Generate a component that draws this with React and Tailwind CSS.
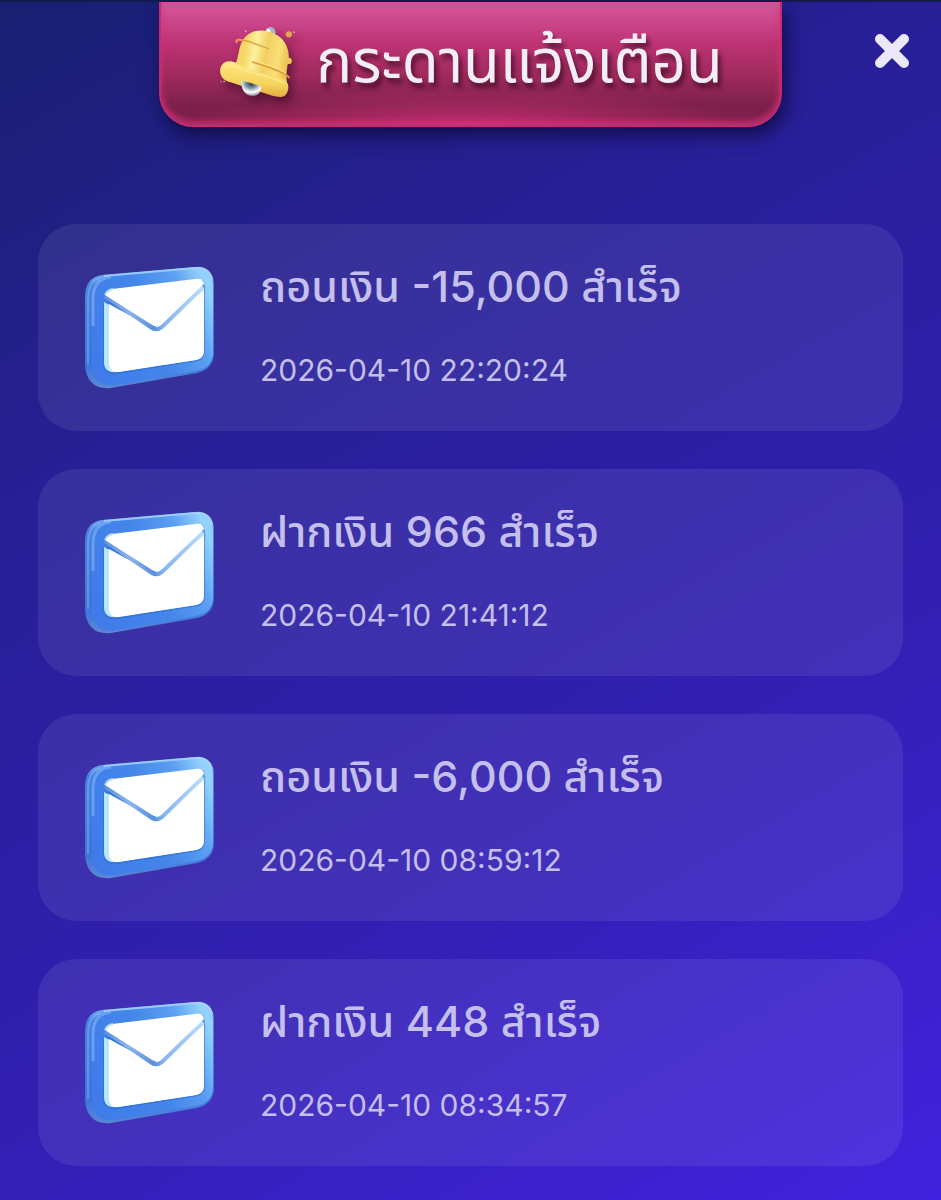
const NOTIFICATIONS = [
  { id: 1, title: 'ถอนเงิน -15,000 สำเร็จ', time: '2026-04-10 22:20:24' },
  { id: 2, title: 'ฝากเงิน 966 สำเร็จ', time: '2026-04-10 21:41:12' },
  { id: 3, title: 'ถอนเงิน -6,000 สำเร็จ', time: '2026-04-10 08:59:12' },
  { id: 4, title: 'ฝากเงิน 448 สำเร็จ', time: '2026-04-10 08:34:57' },
];

// Gradients shared by the bell and every mail icon
function GradientDefs() {
  return (
    <svg className="absolute h-0 w-0" aria-hidden="true">
      <defs>
        <linearGradient id="mailSide" x1="0" y1="0" x2="0" y2="1">
          <stop offset="0" stopColor="#8ac4f8" />
          <stop offset="0.15" stopColor="#4a82e0" />
          <stop offset="0.8" stopColor="#3c74dc" />
          <stop offset="1" stopColor="#5a88d4" />
        </linearGradient>
        <linearGradient id="mailFace" x1="0" y1="0.7" x2="1" y2="0.3">
          <stop offset="0" stopColor="#3f7cea" />
          <stop offset="0.5" stopColor="#4586ea" />
          <stop offset="0.8" stopColor="#5ba0f2" />
          <stop offset="1" stopColor="#93d0fb" />
        </linearGradient>
        <linearGradient id="mailFold" x1="0" y1="0" x2="1" y2="0">
          <stop offset="0" stopColor="#5f92dc" />
          <stop offset="0.25" stopColor="#8ab4ec" />
          <stop offset="0.5" stopColor="#5a8fde" />
          <stop offset="0.6" stopColor="#86b4f0" />
          <stop offset="1" stopColor="#b9ddfa" />
        </linearGradient>
        <linearGradient id="bellBody" x1="0" y1="0.1" x2="1" y2="0.3">
          <stop offset="0" stopColor="#f4cf60" />
          <stop offset="0.25" stopColor="#f5d868" />
          <stop offset="0.42" stopColor="#fdf0a0" />
          <stop offset="0.62" stopColor="#f2d062" />
          <stop offset="0.85" stopColor="#f9df78" />
          <stop offset="1" stopColor="#eec555" />
        </linearGradient>
        <linearGradient id="bellRim" x1="0.3" y1="0" x2="0.2" y2="1">
          <stop offset="0" stopColor="#ffe985" />
          <stop offset="0.6" stopColor="#f5d25c" />
          <stop offset="1" stopColor="#dda43a" />
        </linearGradient>
        <radialGradient id="bellClapper" cx="0.5" cy="0.2" r="0.8">
          <stop offset="0" stopColor="#263747" />
          <stop offset="0.35" stopColor="#7893a3" />
          <stop offset="0.7" stopColor="#ffffff" />
          <stop offset="1" stopColor="#8b8797" />
        </radialGradient>
      </defs>
    </svg>
  );
}

function BellIcon() {
  return (
    <svg
      viewBox="-2 0 76 72"
      className="h-[74px] w-[78px] shrink-0 drop-shadow-[4px_6px_5px_rgba(50,5,30,0.55)]"
      aria-hidden="true"
    >
      <circle cx="49" cy="5" r="5" fill="#aeb6c8" />
      <circle cx="47" cy="4" r="2" fill="#ffffff" />
      <path
        d="M13 39 C18 34 17 22 22 13 C28 3 41 1 52 6 C62 10 67 19 67 29 C66 39 63 45 66 58 C48 62 17 52 13 39Z"
        fill="url(#bellBody)"
      />
      <path
        d="M0 42 C1 34 8 31 16 35 C26 42 40 45 56 48 C65 51 68 56 66 62 C64 69 59 69 51 67 L11 54 C3 52 0 48 0 42Z"
        fill="url(#bellRim)"
      />
      <path
        d="M5 38 C14 34 22 43 33 45 C43 47 52 49 61 54"
        fill="none"
        stroke="#fff1a0"
        strokeWidth="2"
        opacity="0.5"
      />
      <path d="M21 52 Q30 54 40 58 C41 64 36 68 30 67 C24 66 20 60 21 52Z" fill="url(#bellClapper)" />
      <path
        d="M16 15 C15 11 21 12 28 14 L47 21"
        fill="none"
        stroke="#dca548"
        strokeWidth="1.5"
        strokeLinecap="round"
      />
      <path d="M16 14 C16 12 19 12 22 13" fill="none" stroke="#e8906c" strokeWidth="2" strokeLinecap="round" />
      <path d="M32 34 C44 38 62 43 67 49" fill="none" stroke="#d9a03c" strokeWidth="2" strokeLinecap="round" />
      <path d="M32 33 C44 36 58 40 64 45" fill="none" stroke="#ffe68c" strokeWidth="1" />
      <circle cx="67" cy="33" r="3" fill="#eec454" />
      <circle cx="67" cy="7" r="3" fill="#e3a650" />
      <circle cx="72" cy="5" r="1" fill="#eaa38e" />
      <circle cx="25" cy="4" r="1" fill="#f099a6" />
      <circle cx="1" cy="53" r="1" fill="#b76c7d" />
      <circle cx="4" cy="53" r="1" fill="#df8c86" />
    </svg>
  );
}

function MailIcon() {
  return (
    <svg viewBox="0 0 132 124" className="h-[124px] w-[132px] shrink-0" aria-hidden="true">
      <path
        d="M18 9 L111 1 C123 0 130 7 130 19 V87 C130 98 124 104 113 107 L27 122 C11 124 2 115 1 99 V32 C1 18 6 11 18 9Z"
        fill="url(#mailSide)"
      />
      <path
        d="M27 10 L112 2 C123 1 129 8 129 19 V86 C129 97 123 103 112 105 L32 119 C17 121 9 114 8 101 V32 C8 18 14 11 27 10Z"
        fill="url(#mailFace)"
      />
      <path d="M4 98 V34 C4 22 8 14 16 12" fill="none" stroke="#a9d6fc" strokeWidth="2" opacity="0.3" />
      <path d="M9 60 V33 C9 20 14 12 27 11" fill="none" stroke="#9fd0fc" strokeWidth="3" opacity="0.4" />
      <path d="M20 10 L112 2 C121 1 127 6 128 14" fill="none" stroke="#a9d8ff" strokeWidth="2" opacity="0.7" />
      <path
        d="M19 37 L119 14 Q122 20 121 28 V85 Q121 92 115 95 L33 108 C24 109 19 105 19 97Z"
        fill="#2867cb"
        opacity="0.5"
      />
      <path
        d="M20 36 L70 62 L120 22 V84 C120 90 117 93 112 94 L32 106 C24 107 20 103 20 96Z"
        fill="#b8e6ff"
      />
      <path
        d="M25 38 L72 64 L120 24 V84 C120 90 117 93 112 94 L35 106 C28 107 25 103 25 96Z"
        fill="#ffffff"
      />
      <path
        d="M21 30 L68 62 Q73 65 78 61 L119 21"
        fill="none"
        stroke="url(#mailFold)"
        strokeWidth="4"
        strokeLinejoin="round"
      />
      <path
        d="M21 29 Q22 25 28 23 L111 13 C117 12 119 14 120 18 L77 59 Q73 62 68 59Z"
        fill="#ffffff"
      />
      <path d="M21 29 Q23 24 29 23" fill="none" stroke="#b5e0fb" strokeWidth="2" />
    </svg>
  );
}

function CloseButton() {
  return (
    <button
      type="button"
      aria-label="ปิด"
      className="absolute top-[27px] right-[27px] cursor-pointer p-1 text-[#ebe8fa]"
    >
      <svg viewBox="0 0 36 36" className="size-9" aria-hidden="true">
        <path d="M6 6 L30 30 M30 6 L6 30" stroke="currentColor" strokeWidth="10" strokeLinecap="round" />
      </svg>
    </button>
  );
}

function NotificationCard({ title, time }) {
  return (
    <li className="flex h-[207px] items-center gap-11 rounded-[38px] bg-white/8 px-[46px]">
      <MailIcon />
      <div className="flex min-w-0 flex-col gap-[34px] pb-[10px] text-[#c4bfec]">
        <h2 className="text-[43px] leading-[60px] font-medium whitespace-nowrap">{title}</h2>
        <time className="text-[30px] leading-10 whitespace-nowrap">{time}</time>
      </div>
    </li>
  );
}

export default function App() {
  return (
    <main className="relative min-h-screen border-t-2 border-[#111c4d] bg-[linear-gradient(150deg,#191f71_0%,#271f96_30%,#321fb2_65%,#4222df_100%)] pb-8 font-['Inter','Noto_Sans_Thai','Noto_Sans',sans-serif]">
      <GradientDefs />
      <header className="flex justify-center">
        <div className="flex h-[125px] w-[66.3%] items-center justify-center gap-5 rounded-b-[34px] border-x-2 border-b-2 border-[#c52c6e] bg-[radial-gradient(ellipse_46%_30%_at_50%_100%,rgba(214,50,122,0.75),transparent),linear-gradient(180deg,#d8589f_0%,#bd3374_34%,#a22b5f_58%,#7c204b_85%,#7c204b_100%)] shadow-[4px_8px_18px_rgba(12,8,50,0.75),inset_0_-4px_6px_rgba(222,55,130,0.6),inset_0_0_8px_rgba(210,40,110,0.4)]">
          <BellIcon />
          <h1 className="pb-2 text-[60px] leading-[76px] whitespace-nowrap text-[#f3edf5] [text-shadow:3px_5px_5px_rgba(50,5,30,0.7)]">
            กระดานแจ้งเตือน
          </h1>
        </div>
      </header>
      <CloseButton />
      <ul className="mt-[97px] flex flex-col gap-[38px] px-[38px]">
        {NOTIFICATIONS.map((item) => (
          <NotificationCard key={item.id} title={item.title} time={item.time} />
        ))}
      </ul>
    </main>
  );
}
